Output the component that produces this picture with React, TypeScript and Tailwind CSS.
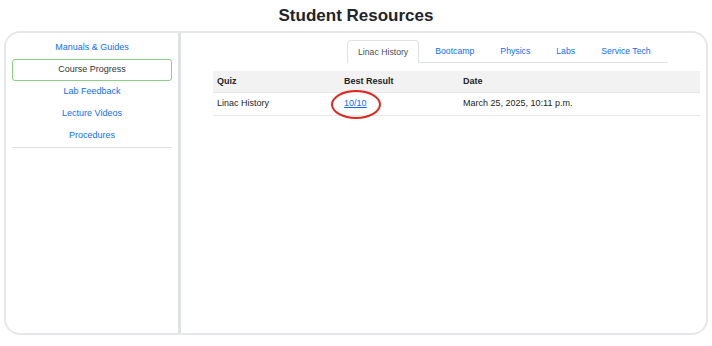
const sideItems = ['Manuals & Guides', 'Course Progress', 'Lab Feedback', 'Lecture Videos', 'Procedures']
const tabs = ['Linac History', 'Bootcamp', 'Physics', 'Labs', 'Service Tech']

export default function App() {
  return (
    <div className="w-[712px] h-[346px] bg-white text-[#212529] text-[9px]" style={{ fontFamily: '"Liberation Sans", Arial, sans-serif' }}>
      <h1 className="h-[31px] flex items-center justify-center text-[17px] font-bold text-[#212529]">
        Student Resources
      </h1>

      <div className="mx-1 h-[304px] flex rounded-[16px] border-2 border-[#e5e7eb] overflow-hidden">
        <aside className="w-[175px] px-[6px] pt-[4px] border-r-[3px] border-[#dee2e6]">
          <nav className="flex flex-col border-b border-[#dee2e6]">
            {sideItems.map((item) => (
              <div
                key={item}
                className={`h-[22px] flex items-center justify-center rounded-[3px] ${
                  item === 'Course Progress'
                    ? 'border border-[#8ccf86] text-[#333]'
                    : 'text-[#0d6efd]'
                }`}
              >
                {item}
              </div>
            ))}
          </nav>
        </aside>

        <main className="flex-1 pt-[7px]">
          <div className="flex ml-[166px] w-[321px] border-b border-[#dee2e6] whitespace-nowrap text-[8.7px]">
            {tabs.map((tab, i) => (
              <div
                key={tab}
                className={`shrink-0 px-[10px] mr-[6px] flex items-center pt-px ${
                  i === 0
                    ? 'border border-b-0 border-[#dee2e6] rounded-t-[4px] bg-white -mb-px h-[23px] text-[#495057]'
                    : 'h-[22px] text-[#0d6efd]'
                }`}
              >
                {tab}
              </div>
            ))}
          </div>

          <table className="ml-[32px] mt-[8px] w-[487px] border-collapse text-left">
            <thead>
              <tr className="h-[21px] bg-[#f2f2f2] border-b border-[#e5e7eb]">
                <th className="w-[127px] pl-[4px] font-bold">Quiz</th>
                <th className="w-[119px] pl-[4px] font-bold">Best Result</th>
                <th className="pl-[4px] font-bold">Date</th>
              </tr>
            </thead>
            <tbody>
              <tr className="h-[23px] border-b border-[#e5e7eb]">
                <td className="pl-[4px]">Linac History</td>
                <td className="pl-[4px]">
                  <span className="relative">
                    <a href="#" className="text-[#0d6efd] underline">10/10</a>
                    <span className="absolute left-[-13px] top-[-8px] w-[50px] h-[29px] rounded-[50%] border-2 border-[#e0261f]" />
                  </span>
                </td>
                <td className="pl-[4px]">March 25, 2025, 10:11 p.m.</td>
              </tr>
            </tbody>
          </table>
        </main>
      </div>
    </div>
  )
}
